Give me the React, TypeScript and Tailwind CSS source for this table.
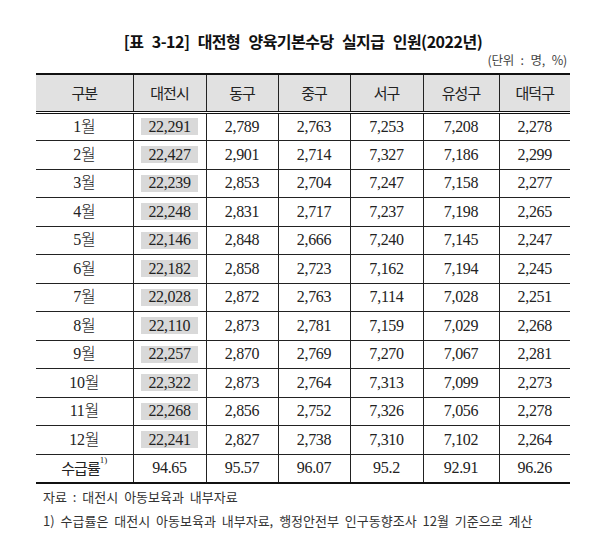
import React from "react";

const rows: [string, string, string, string, string, string, string][] = [
  ["1월", "22,291", "2,789", "2,763", "7,253", "7,208", "2,278"],
  ["2월", "22,427", "2,901", "2,714", "7,327", "7,186", "2,299"],
  ["3월", "22,239", "2,853", "2,704", "7,247", "7,158", "2,277"],
  ["4월", "22,248", "2,831", "2,717", "7,237", "7,198", "2,265"],
  ["5월", "22,146", "2,848", "2,666", "7,240", "7,145", "2,247"],
  ["6월", "22,182", "2,858", "2,723", "7,162", "7,194", "2,245"],
  ["7월", "22,028", "2,872", "2,763", "7,114", "7,028", "2,251"],
  ["8월", "22,110", "2,873", "2,781", "7,159", "7,029", "2,268"],
  ["9월", "22,257", "2,870", "2,769", "7,270", "7,067", "2,281"],
  ["10월", "22,322", "2,873", "2,764", "7,313", "7,099", "2,273"],
  ["11월", "22,268", "2,856", "2,752", "7,326", "7,056", "2,278"],
  ["12월", "22,241", "2,827", "2,738", "7,310", "7,102", "2,264"],
];

const last = ["94.65", "95.57", "96.07", "95.2", "92.91", "96.26"];
const heads = ["구분", "대전시", "동구", "중구", "서구", "유성구", "대덕구"];

const serif = "font-['Liberation_Serif','Noto_Sans_CJK_KR',serif]";
const sans = "font-['Noto_Sans_CJK_KR','Noto_Sans',sans-serif]";

export default function App() {
  return (
    <div className="w-[600px] h-[535px] bg-white text-[#222] overflow-hidden">
      <div className="pt-[29px] flex justify-center pl-[6px]">
        <h1 className={`${sans} text-[16px] font-bold leading-[24px] tracking-[-0.5px] [word-spacing:5px] text-[#111]`}>
          [표 3-12] 대전형 양육기본수당 실지급 인원(2022년)
        </h1>
      </div>
      <div className="pl-[36px] pr-[30px]">
        <div className={`${sans} text-right text-[12.5px] leading-[18px] text-[#444] tracking-[-0.2px] [word-spacing:4px] mt-[-2px] pr-[3px]`}>
          (단위 : 명, %)
        </div>
        <table className="mt-[4px] border-collapse w-[534px] table-fixed">
          <colgroup>
            <col className="w-[97px]" />
            <col className="w-[73px]" />
            <col className="w-[72px]" />
            <col className="w-[72px]" />
            <col className="w-[73px]" />
            <col className="w-[76px]" />
            <col className="w-[71px]" />
          </colgroup>
          <thead>
            <tr className="bg-[#e1e1e1] border-t-[2px] border-t-[#111] border-b-[3px] border-b-[#111] border-double">
              {heads.map((h, i) => (
                <th
                  key={h}
                  className={`${sans} h-[38px] p-0 text-center text-[15px] font-normal tracking-[-1px] text-[#222] ${i > 0 ? "border-l border-l-[#222]" : ""}`}
                >
                  {h}
                </th>
              ))}
            </tr>
          </thead>
          <tbody>
            {rows.map((r) => (
              <tr key={r[0]} className="border-b border-b-[#222]">
                {r.map((c, i) => (
                  <td
                    key={i}
                    className={`${serif} h-[28.5px] p-0 text-center text-[16px] leading-none text-[#222] ${i > 0 ? "border-l border-l-[#222]" : "font-light"}`}
                  >
                    {i === 1 ? (
                      <span className="inline-flex items-center justify-center w-[57px] h-[17px] bg-[#d9d9d9] tracking-[-0.3px]">
                        {c}
                      </span>
                    ) : (
                      <span className="tracking-[-0.3px]">{c}</span>
                    )}
                  </td>
                ))}
              </tr>
            ))}
            <tr className="border-b-[2px] border-b-[#111]">
              <td className={`${serif} h-[28.5px] p-0 text-center text-[16px] leading-none`}>
                <span className={`${sans} text-[15px] tracking-[-1px]`}>수급률</span>
                <sup className="text-[9px] align-super">1)</sup>
              </td>
              {last.map((c, i) => (
                <td
                  key={i}
                  className={`${serif} h-[28.5px] p-0 text-center text-[16px] leading-none border-l border-l-[#222] tracking-[-0.3px]`}
                >
                  {c}
                </td>
              ))}
            </tr>
          </tbody>
        </table>
        <div className={`${sans} pl-[7px] mt-[1px] text-[13px] text-[#333] leading-[24px] [word-spacing:3px]`}>
          <div>자료 : 대전시 아동보육과 내부자료</div>
          <div>1) 수급률은 대전시 아동보육과 내부자료, 행정안전부 인구동향조사 12월 기준으로 계산</div>
        </div>
      </div>
    </div>
  );
}
